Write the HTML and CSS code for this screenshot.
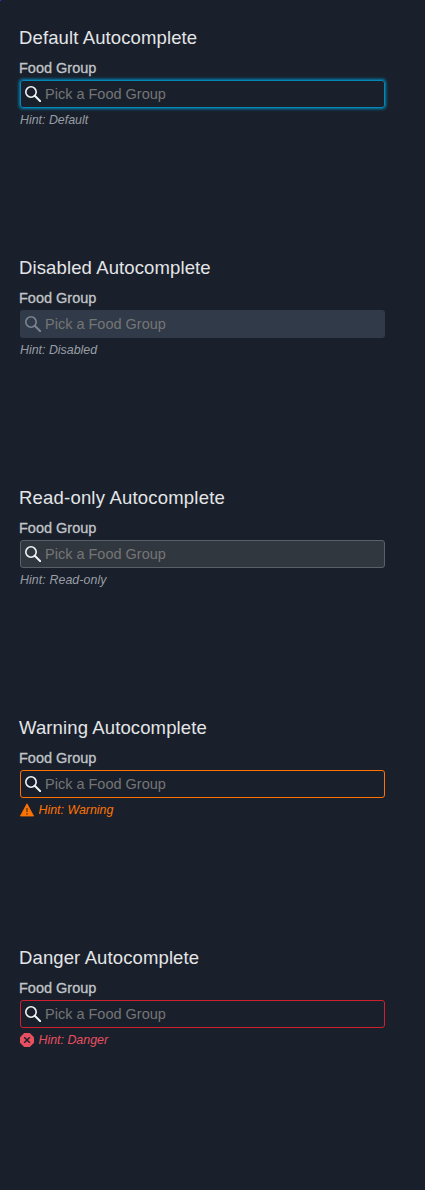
FILE: index.html
```html
<!DOCTYPE html>
<html lang="en">
<head>
<meta charset="utf-8">
<title>Autocomplete</title>
<link rel="stylesheet" href="styles.css">
</head>
<body>
<span class="corner-mark"></span>
<svg class="sprite" aria-hidden="true">
  <symbol id="search" viewBox="0 0 16 16">
    <circle cx="6" cy="6" r="5.2" fill="none" stroke="currentColor" stroke-width="1.6"/>
    <path d="M9.8 9.8 15.4 15.4" fill="none" stroke="currentColor" stroke-width="2" stroke-linecap="round"/>
  </symbol>
</svg>
<main class="page">
  <section class="example">
    <h2 class="title">Default Autocomplete</h2>
    <label class="label" for="f1">Food Group</label>
    <div class="field field-focus"><svg class="search"><use href="#search"/></svg><input class="input" id="f1" placeholder="Pick a Food Group"></div>
    <div class="hint">Hint: Default</div>
  </section>
  <section class="example">
    <h2 class="title">Disabled Autocomplete</h2>
    <label class="label" for="f2">Food Group</label>
    <div class="field field-disabled"><svg class="search"><use href="#search"/></svg><input class="input" id="f2" placeholder="Pick a Food Group" disabled></div>
    <div class="hint">Hint: Disabled</div>
  </section>
  <section class="example">
    <h2 class="title title-readonly">Read-only Autocomplete</h2>
    <label class="label" for="f3">Food Group</label>
    <div class="field field-readonly"><svg class="search"><use href="#search"/></svg><input class="input" id="f3" placeholder="Pick a Food Group" readonly></div>
    <div class="hint hint-readonly">Hint: Read-only</div>
  </section>
  <section class="example">
    <h2 class="title">Warning Autocomplete</h2>
    <label class="label" for="f4">Food Group</label>
    <div class="field field-warning"><svg class="search"><use href="#search"/></svg><input class="input" id="f4" placeholder="Pick a Food Group"></div>
    <div class="hint hint-status hint-warning"><svg class="status" viewBox="0 0 14 14"><path d="M7 .8 13.6 13H.4Z" fill="currentColor" stroke="currentColor" stroke-width=".8" stroke-linejoin="round"/><path d="M7 5v4M7 10.3v1.4" stroke="#5c3c20" stroke-width="1.4"/></svg>Hint: Warning</div>
  </section>
  <section class="example">
    <h2 class="title">Danger Autocomplete</h2>
    <label class="label" for="f5">Food Group</label>
    <div class="field field-danger"><svg class="search"><use href="#search"/></svg><input class="input" id="f5" placeholder="Pick a Food Group"></div>
    <div class="hint hint-status hint-danger"><svg class="status" viewBox="0 0 14 14"><path d="M4.2 0h5.6L14 4.2v5.6L9.8 14H4.2L0 9.8V4.2Z" fill="currentColor"/><path d="m4.2 4.2 5.6 5.6m0-5.6L4.2 9.8" stroke="#19202b" stroke-width="1.5"/></svg>Hint: Danger</div>
  </section>
</main>
</body>
</html>
```
FILE: styles.css
```css
* { box-sizing: border-box; }
body {
  margin: 0;
  background: #19202b;
  color: #e4e5e7;
  font-family: "Liberation Sans", Arial, sans-serif;
}
.corner-mark {
  position: absolute;
  top: 0;
  left: 0;
  width: 1px;
  height: 1px;
  background: #3030f0;
}
.sprite { display: none; }
.page { padding: 20px 40px 20px 20px; }
.example { height: 230px; }
.title {
  margin: 0 0 0 -1px;
  height: 36px;
  font-size: 18.5px;
  line-height: 35px;
  font-weight: 400;
  letter-spacing: .12px;
}
.title-readonly { letter-spacing: .2px; }
.label {
  display: block;
  height: 24px;
  margin-left: -1px;
  font-size: 14.5px;
  line-height: 24px;
  color: #c1c4c8;
  -webkit-text-stroke: .3px #c1c4c8;
}
.field {
  display: flex;
  align-items: center;
  gap: 4px;
  width: 365px;
  height: 28px;
  padding: 0 4px;
  border: 1px solid transparent;
  border-radius: 3px;
}
.field-focus { border-color: #0387b7; box-shadow: 0 0 3px 1px #0387b7; }
.field-disabled { background: #313a48; }
.field-readonly { background: #31373f; border-color: #596069; }
.field-warning { border-color: #ff7300; }
.field-danger { border-color: #cf2030; }
.search { flex: none; width: 16px; height: 16px; color: #f2f3f5; }
.field-disabled .search { color: #7c8490; }
.input {
  flex: 1;
  min-width: 0;
  height: 24px;
  padding: 0;
  border: 0;
  outline: 0;
  background: transparent;
  font: 14.5px "Liberation Sans", Arial, sans-serif;
}
.input::placeholder { color: #757575; opacity: 1; }
.hint {
  display: flex;
  align-items: center;
  gap: 5px;
  height: 24px;
  font-size: 12.4px;
  font-style: italic;
  color: #989da4;
}
.hint-readonly { letter-spacing: .08px; }
.status { width: 14px; height: 14px; }
.hint-status { gap: 4.5px; }
.hint-warning { color: #ff7300; }
.hint-danger { color: #e84f60; }
```
